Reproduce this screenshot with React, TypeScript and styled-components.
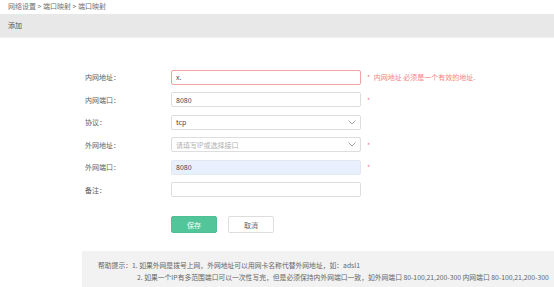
import React from "react";
import styled, { createGlobalStyle, css } from "styled-components";

const GlobalStyle = createGlobalStyle`
  html, body {
    margin: 0;
    padding: 0;
    background: #ffffff;
  }
  body {
    font-family: "Noto Sans CJK SC", "Noto Sans", sans-serif;
    font-size: 7px;
    color: #555555;
  }
`;

const Page = styled.div`
  width: 554px;
  height: 287px;
  overflow: hidden;
`;

const Breadcrumb = styled.div`
  height: 13.5px;
  line-height: 12px;
  padding-left: 8px;
  color: #707070;
  font-size: 7px;
`;

const Header = styled.div`
  height: 23px;
  line-height: 23px;
  padding-left: 8px;
  background: #e8e8e8;
  border-bottom: 1px solid #f2f2f2;
  color: #555555;
  font-size: 7px;
`;

const Form = styled.div`
  display: grid;
  grid-template-columns: 86px 190px auto;
  row-gap: 7.5px;
  align-items: center;
  margin: 32px 0 0 85px;
`;

const Label = styled.label`
  color: #606060;
  font-size: 7px;
`;

const fieldBox = css`
  box-sizing: border-box;
  height: 15px;
  width: 190px;
  border: 1px solid #dddddd;
  border-radius: 2px;
  padding: 0 4px;
  font-family: "Noto Sans CJK SC", "Noto Sans", sans-serif;
  font-size: 7px;
  color: #444444;
  background: #ffffff;
`;

const Field = styled.input<{ $error?: boolean; $filled?: boolean }>`
  ${fieldBox}
  outline: none;
  display: block;
  ${(p) => p.$error && `border-color: #f4a3a3;`}
  ${(p) => p.$filled && `background: #e8f0fe; border-color: #e3e8f0;`}

  &::placeholder {
    color: #b0b0b0;
  }
`;

const Select = styled.div<{ $placeholder?: boolean }>`
  ${fieldBox}
  display: flex;
  align-items: center;
  justify-content: space-between;
  color: ${(p) => (p.$placeholder ? "#b0b0b0" : "#444444")};
`;

const Tip = styled.div`
  display: flex;
  align-items: center;
  gap: 3.5px;
  padding-left: 6px;
  color: #f48282;
  font-size: 7px;
  white-space: nowrap;
`;

const Star = styled.span`
  color: #f48282;
`;

const Actions = styled.div`
  display: flex;
  gap: 11px;
  margin: 19px 0 0 171px;
`;

const Button = styled.div<{ $primary?: boolean }>`
  box-sizing: border-box;
  width: 46px;
  height: 17px;
  display: flex;
  align-items: center;
  justify-content: center;
  border-radius: 2px;
  font-size: 7px;
  ${(p) =>
    p.$primary
      ? `background: #52c69a; color: #ffffff; border: 1px solid #4dbf93;`
      : `background: #ffffff; color: #666666; border: 1px solid #dddddd;`}
`;

const Help = styled.div`
  display: flex;
  margin: 18px 0 0 82px;
  padding: 8px 0 10px 16px;
  background: #f2f2f2;
  color: #666666;
  font-size: 6.8px;
  line-height: 12px;
  white-space: nowrap;
`;

const HelpLines = styled.div`
  display: flex;
  flex-direction: column;
`;

const HelpLine = styled.div<{ $indent?: boolean }>`
  padding-left: ${(p) => (p.$indent ? "5px" : "0")};
`;

const Chevron = () => (
  <svg width="8" height="5" viewBox="0 0 8 5">
    <polyline points="0.5,0.5 4,4 7.5,0.5" fill="none" stroke="#999" strokeWidth="0.9" />
  </svg>
);

export default function App() {
  return (
    <Page>
      <GlobalStyle />
      <Breadcrumb>网络设置 &gt; 端口映射 &gt; 端口映射</Breadcrumb>
      <Header>添加</Header>
      <Form>
        <Label>内网地址：</Label>
        <Field $error value="x." readOnly />
        <Tip>
          <Star>*</Star>
          <span>内网地址 必须是一个有效的地址.</span>
        </Tip>

        <Label>内网端口：</Label>
        <Field value="8080" readOnly />
        <Tip>
          <Star>*</Star>
        </Tip>

        <Label>协议：</Label>
        <Select>
          <span>tcp</span>
          <Chevron />
        </Select>
        <Tip />

        <Label>外网地址：</Label>
        <Select $placeholder>
          <span>请填写IP或选择接口</span>
          <Chevron />
        </Select>
        <Tip>
          <Star>*</Star>
        </Tip>

        <Label>外网端口：</Label>
        <Field $filled value="8080" readOnly />
        <Tip>
          <Star>*</Star>
        </Tip>

        <Label>备注：</Label>
        <Field value="" readOnly />
        <Tip />
      </Form>
      <Actions>
        <Button $primary>保存</Button>
        <Button>取消</Button>
      </Actions>
      <Help>
        <span>帮助提示：</span>
        <HelpLines>
          <HelpLine>1. 如果外网是拨号上网，外网地址可以用网卡名称代替外网地址，如：adsl1</HelpLine>
          <HelpLine $indent>
            2. 如果一个IP有多范围端口可以一次性写完，但是必须保持内外网端口一致，如外网端口 80-100,21,200-300 内网端口 80-100,21,200-300
          </HelpLine>
        </HelpLines>
      </Help>
    </Page>
  );
}
